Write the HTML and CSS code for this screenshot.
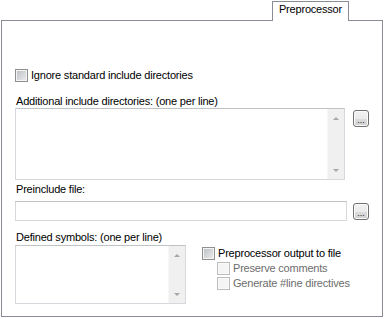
FILE: index.html
```html
<!DOCTYPE html>
<html lang="en">
<head>
  <meta charset="UTF-8">
  <title>Preprocessor</title>
  <link rel="stylesheet" href="styles.css">
</head>
<body>
  <div class="tabbar">
    <div class="tab">Preprocessor</div>
  </div>

  <div class="panel">
    <div class="check-row">
      <span class="check"></span>
      <span>Ignore standard include directories</span>
    </div>

    <div class="label label-first">Additional include directories: (one per line)</div>
    <div class="field-row">
      <div class="textbox textbox-dirs">
        <div class="text-area"></div>
        <div class="scrollbar">
          <span class="arrow up"></span>
          <span class="arrow down"></span>
        </div>
      </div>
      <button class="browse browse-dirs">...</button>
    </div>

    <div class="label label-file">Preinclude file:</div>
    <div class="field-row centered">
      <div class="textbox textbox-file"></div>
      <button class="browse">...</button>
    </div>

    <div class="label label-symbols">Defined symbols: (one per line)</div>
    <div class="bottom-row">
      <div class="textbox textbox-symbols">
        <div class="text-area"></div>
        <div class="scrollbar">
          <span class="arrow up"></span>
          <span class="arrow down"></span>
        </div>
      </div>

      <div class="options">
        <div class="check-row">
          <span class="check"></span>
          <span>Preprocessor output to file</span>
        </div>
        <div class="check-row sub disabled">
          <span class="check"></span>
          <span>Preserve comments</span>
        </div>
        <div class="check-row sub disabled">
          <span class="check"></span>
          <span>Generate #line directives</span>
        </div>
      </div>
    </div>
  </div>
</body>
</html>
```

FILE: styles.css
```css
body {
  margin: 0;
  padding: 1px 2px 2px 1px;
  background-color: #fff;
  font-family: "Liberation Sans", Arial, sans-serif;
  font-size: 11px;
  letter-spacing: -0.2px;
  line-height: 13px;
  color: #000;
}

/* tab strip */
.tabbar {
  display: flex;
  justify-content: flex-end;
  height: 19px;
  padding-right: 34px;
}

.tab {
  position: relative;
  width: 75px;
  height: 18px;
  margin-bottom: -1px;
  padding-top: 1px;
  border: 1px solid #898c95;
  border-bottom: none;
  background-color: #fff;
  text-align: center;
}

.panel {
  box-sizing: border-box;
  height: 297px;
  padding: 48px 13px 0 13px;
  border: 1px solid #898c95;
}

/* checkboxes */
.check-row {
  display: flex;
  align-items: center;
  gap: 3px;
  height: 13px;
}

.check {
  flex: none;
  box-sizing: border-box;
  width: 13px;
  height: 13px;
  border: 1px solid #8e8f8f;
  background: linear-gradient(135deg, #b9bdc3, #eeeeee);
  box-shadow: inset 0 0 0 1px #f4f4f4;
}

.check-row.sub {
  margin-left: 15px;
}

.check-row.disabled {
  color: #6d6d6d;
}

.check-row.disabled .check {
  border-color: #bcbcbc;
  background: #f4f4f4;
  box-shadow: inset 0 0 0 1px #fafafa;
}

/* labels */
.label {
  padding-left: 1px;
}

.label-first {
  margin-top: 13px;
}

.label-file {
  margin-top: 3px;
  margin-bottom: 5px;
}

.label-symbols {
  margin-top: 10px;
  margin-bottom: 1px;
}

/* text boxes */
.field-row {
  display: flex;
  align-items: flex-start;
  gap: 8px;
}

.field-row.centered {
  align-items: center;
  gap: 6px;
}

.textbox {
  display: flex;
  box-sizing: border-box;
  border: 1px solid #d5d8dc;
  border-top-color: #bfc2c7;
  background-color: #fff;
}

.textbox-dirs {
  width: 330px;
  height: 72px;
}

.textbox-file {
  width: 332px;
  height: 20px;
}

.textbox-symbols {
  width: 171px;
  height: 59px;
}

.text-area {
  flex: 1;
}

.scrollbar {
  display: flex;
  flex-direction: column;
  justify-content: space-between;
  align-items: center;
  box-sizing: border-box;
  width: 17px;
  padding: 8px 0 7px;
  background-color: #f0f0f0;
  border-left: 1px solid #f7f7f7;
}

.arrow {
  width: 0;
  height: 0;
  border-left: 3px solid transparent;
  border-right: 3px solid transparent;
}

.arrow.up {
  border-bottom: 3px solid #a6a6a6;
}

.arrow.down {
  border-top: 3px solid #a6a6a6;
}

/* browse buttons */
.browse {
  flex: none;
  display: flex;
  align-items: flex-end;
  justify-content: center;
  box-sizing: border-box;
  width: 16px;
  height: 17px;
  padding: 0 0 1px;
  border: 1px solid #707070;
  border-radius: 3px;
  background: linear-gradient(#f2f2f2, #ebebeb 50%, #dddddd 51%, #cfcfcf);
  box-shadow: inset 0 0 0 1px #fcfcfc;
  font-family: "Liberation Sans", Arial, sans-serif;
  font-size: 9px;
  line-height: 9px;
  color: #222;
}

.browse-dirs {
  margin-top: 2px;
}

/* bottom section */
.bottom-row {
  display: flex;
  gap: 16px;
}

.options {
  display: flex;
  flex-direction: column;
  gap: 2px;
  padding-top: 2px;
}
```
